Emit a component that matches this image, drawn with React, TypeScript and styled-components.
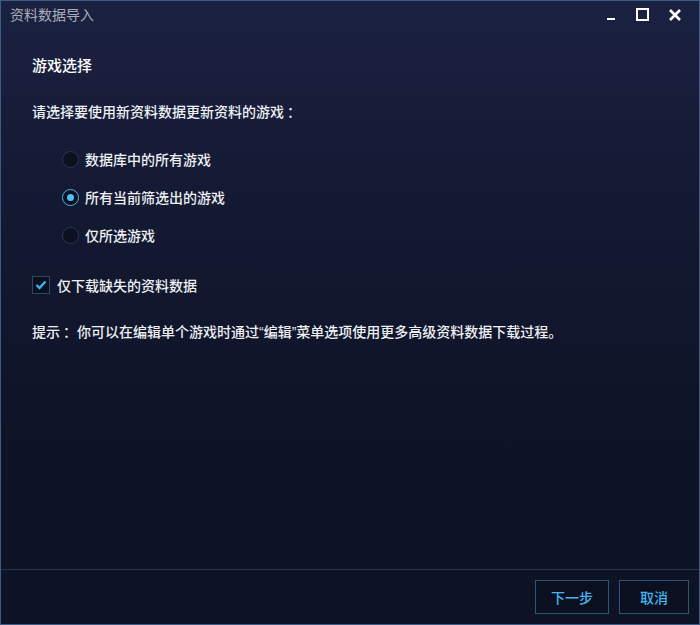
import styled, { createGlobalStyle } from "styled-components";

const GlobalStyle = createGlobalStyle`
  html, body {
    margin: 0;
    padding: 0;
    background: #0d1224;
  }
  body {
    font-family: "Noto Sans CJK SC", "Noto Sans", sans-serif;
  }
`;

const options = ["数据库中的所有游戏", "所有当前筛选出的游戏", "仅所选游戏"];

export default function App() {
  return (
    <>
      <GlobalStyle />
      <Window lang="zh-CN">
        <TitleBar>
          <WindowTitle>资料数据导入</WindowTitle>
          <Controls>
            <ControlButton>
              <svg width="12" height="12" viewBox="0 0 12 12">
                <rect x="2" y="9" width="8" height="2" fill="#fff" />
              </svg>
            </ControlButton>
            <ControlButton>
              <svg width="14" height="14" viewBox="0 0 14 14">
                <rect x="1" y="1" width="11" height="11" fill="none" stroke="#fff" strokeWidth="2" />
              </svg>
            </ControlButton>
            <ControlButton>
              <svg width="14" height="14" viewBox="0 0 14 14">
                <path d="M2 2 L12 12 M12 2 L2 12" stroke="#fff" strokeWidth="2.6" />
              </svg>
            </ControlButton>
          </Controls>
        </TitleBar>

        <Body>
          <SectionTitle>游戏选择</SectionTitle>
          <Prompt>
            请选择要使用新资料数据更新资料的游戏<Colon>：</Colon>
          </Prompt>

          <RadioList>
            {options.map((label, i) => (
              <RadioRow key={label}>
                <Radio $checked={i === 1} />
                <Label>{label}</Label>
              </RadioRow>
            ))}
          </RadioList>

          <CheckRow>
            <CheckBox>
              <svg width="12" height="10" viewBox="0 0 12 10">
                <path d="M1.5 5 L4.5 8 L10.5 1.5" fill="none" stroke="#3fb3ef" strokeWidth="2.4" />
              </svg>
            </CheckBox>
            <Label>仅下载缺失的资料数据</Label>
          </CheckRow>

          <Hint>
            提示<Colon>：</Colon>你可以在编辑单个游戏时通过<Quote>“</Quote>编辑<Quote>”</Quote>菜单选项使用更多高级资料数据下载过程。
          </Hint>
        </Body>

        <Footer>
          <Button $w={74}>下一步</Button>
          <Button $w={70}>取消</Button>
        </Footer>
      </Window>
    </>
  );
}

const Window = styled.div`
  width: 700px;
  height: 625px;
  box-sizing: border-box;
  border: 1px solid #3b5c86;
  background: linear-gradient(180deg, #1b2141 0%, #141a33 30%, #0e1326 70%, #0d1224 100%);
  display: flex;
  flex-direction: column;
`;

const TitleBar = styled.div`
  height: 29px;
  display: flex;
  align-items: center;
  justify-content: space-between;
  padding-left: 9px;
`;

const WindowTitle = styled.div`
  font-size: 14px;
  color: #a9aeba;
  line-height: 20px;
  margin-top: -4px;
`;

const Controls = styled.div`
  display: flex;
  align-items: center;
  padding-right: 8px;
`;

const ControlButton = styled.div`
  width: 32px;
  height: 24px;
  display: flex;
  align-items: center;
  justify-content: center;
  margin-top: -2px;
`;

const Body = styled.div`
  flex: 1;
  padding: 25px 0 0 31px;
  display: flex;
  flex-direction: column;
  align-items: flex-start;
`;

const SectionTitle = styled.div`
  font-size: 15px;
  font-weight: 500;
  color: #ffffff;
  line-height: 20px;
`;

const Prompt = styled.div`
  margin-top: 26px;
  font-size: 14px;
  font-weight: 500;
  color: #eef0f4;
  line-height: 20px;
  white-space: nowrap;
`;

const Colon = styled.span`
  padding-left: 3px;
`;

const RadioList = styled.div`
  margin-top: 28px;
  padding-left: 30px;
  display: flex;
  flex-direction: column;
  gap: 18px;
`;

const RadioRow = styled.div`
  display: flex;
  align-items: center;
  gap: 6px;
  height: 20px;
`;

const Radio = styled.div<{ $checked?: boolean }>`
  width: 17px;
  height: 17px;
  box-sizing: border-box;
  border-radius: 50%;
  border: 1.5px solid ${(p) => (p.$checked ? "#4ab6e8" : "#283a53")};
  background: #0c1122;
  display: flex;
  align-items: center;
  justify-content: center;
  &::after {
    content: "";
    width: 7px;
    height: 7px;
    border-radius: 50%;
    background: #4fc0f4;
    display: ${(p) => (p.$checked ? "block" : "none")};
  }
`;

const Label = styled.span`
  font-size: 14px;
  font-weight: 500;
  color: #eef0f4;
  line-height: 20px;
`;

const CheckRow = styled.div`
  margin-top: 30px;
  display: flex;
  align-items: center;
  gap: 7px;
  height: 20px;
`;

const CheckBox = styled.div`
  width: 18px;
  height: 18px;
  box-sizing: border-box;
  border: 1px solid #2d4966;
  background: #0c1122;
  display: flex;
  align-items: center;
  justify-content: center;
`;

const Hint = styled.div`
  margin-top: 26px;
  font-size: 14px;
  font-weight: 500;
  color: #eef0f4;
  line-height: 20px;
  white-space: nowrap;
`;

const Quote = styled.span`
  font-family: "Liberation Sans", sans-serif;
`;

const Footer = styled.div`
  height: 55px;
  border-top: 1px solid #26334b;
  display: flex;
  justify-content: flex-end;
  align-items: flex-start;
  gap: 10px;
  padding: 10px 10px 0 0;
  box-sizing: border-box;
`;

const Button = styled.div<{ $w: number }>`
  width: ${(p) => p.$w}px;
  height: 34px;
  box-sizing: border-box;
  border: 1px solid #2c5676;
  background: #0b1020;
  color: #45b4ee;
  font-size: 14px;
  font-weight: 500;
  display: flex;
  align-items: center;
  justify-content: center;
`;
